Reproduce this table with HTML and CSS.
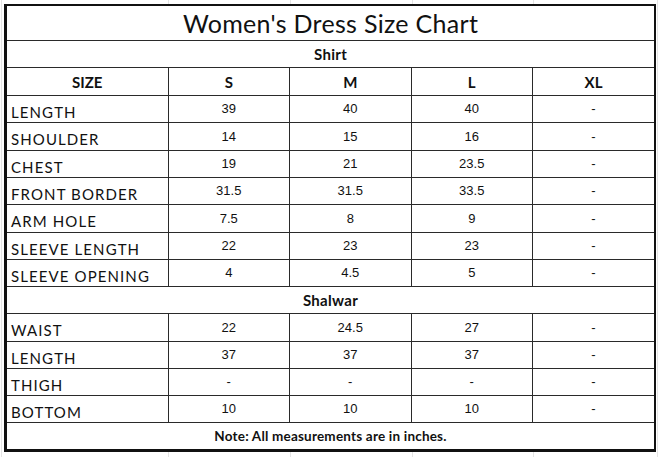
FILE: index.html
```html
<!DOCTYPE html>
<html>
<head>
<meta charset="utf-8">
<link rel="stylesheet" href="styles.css">
</head>
<body>
<div class="sheet">
  <div class="frame">
    <table class="chart">
      <colgroup>
        <col class="c-label"><col class="c-size"><col class="c-size"><col class="c-size"><col class="c-size">
      </colgroup>
      <tr class="r-title"><td colspan="5" class="title">Women's Dress Size Chart</td></tr>
      <tr class="r27"><td colspan="5" class="section">Shirt</td></tr>
      <tr class="r28 head"><td>SIZE</td><td>S</td><td>M</td><td>L</td><td>XL</td></tr>
      <tr class="r27"><td class="label">LENGTH</td><td class="val">39</td><td class="val">40</td><td class="val">40</td><td class="val">-</td></tr>
      <tr class="r28"><td class="label">SHOULDER</td><td class="val">14</td><td class="val">15</td><td class="val">16</td><td class="val">-</td></tr>
      <tr class="r27"><td class="label">CHEST</td><td class="val">19</td><td class="val">21</td><td class="val">23.5</td><td class="val">-</td></tr>
      <tr class="r27"><td class="label">FRONT BORDER</td><td class="val">31.5</td><td class="val">31.5</td><td class="val">33.5</td><td class="val">-</td></tr>
      <tr class="r28"><td class="label">ARM HOLE</td><td class="val">7.5</td><td class="val">8</td><td class="val">9</td><td class="val">-</td></tr>
      <tr class="r27"><td class="label">SLEEVE LENGTH</td><td class="val">22</td><td class="val">23</td><td class="val">23</td><td class="val">-</td></tr>
      <tr class="r27"><td class="label">SLEEVE OPENING</td><td class="val">4</td><td class="val">4.5</td><td class="val">5</td><td class="val">-</td></tr>
      <tr class="r27"><td colspan="5" class="section">Shalwar</td></tr>
      <tr class="r28"><td class="label">WAIST</td><td class="val">22</td><td class="val">24.5</td><td class="val">27</td><td class="val">-</td></tr>
      <tr class="r27"><td class="label">LENGTH</td><td class="val">37</td><td class="val">37</td><td class="val">37</td><td class="val">-</td></tr>
      <tr class="r27"><td class="label">THIGH</td><td class="val">-</td><td class="val">-</td><td class="val">-</td><td class="val">-</td></tr>
      <tr class="r27"><td class="label">BOTTOM</td><td class="val">10</td><td class="val">10</td><td class="val">10</td><td class="val">-</td></tr>
      <tr class="r27"><td colspan="5" class="note">Note: All measurements are in inches.</td></tr>
    </table>
  </div>
</div>
</body>
</html>
```
FILE: styles.css
```css
html, body {
  margin: 0;
  padding: 0;
  background: #fff;
}

.sheet {
  width: 660px;
  height: 457px;
  padding: 4px 0 0 4px;
  box-sizing: border-box;
  background-color: #fff;
  background-image:
    linear-gradient(#e4e4e4, #e4e4e4),
    linear-gradient(#e4e4e4, #e4e4e4),
    linear-gradient(#e4e4e4, #e4e4e4),
    linear-gradient(#e4e4e4, #e4e4e4),
    linear-gradient(#e4e4e4, #e4e4e4),
    linear-gradient(#e4e4e4, #e4e4e4);
  background-size: 1px 100%;
  background-repeat: no-repeat;
  background-position: 1px 0, 168px 0, 290px 0, 412px 0, 533px 0, 657px 0;
}

.frame {
  width: 652px;
  border: 2px solid #111;
  border-left-width: 3px;
  border-bottom-width: 3px;
  box-sizing: border-box;
  background: #fff;
}

.chart {
  width: 100%;
  border-collapse: collapse;
  border-style: hidden;
  table-layout: fixed;
}

.c-label { width: 161px; }
.c-size { width: 121.5px; }

.chart td {
  border: 1px solid #2a2a2a;
  padding: 0;
  text-align: center;
  vertical-align: middle;
  color: #111;
  white-space: nowrap;
  overflow: hidden;
}

.r-title { height: 34px; }
.r27 { height: 27px; }
.r28 { height: 28px; }

.title {
  font-family: Lato, "Noto Sans", sans-serif;
  font-size: 25px;
  font-weight: 400;
  letter-spacing: 0.3px;
  color: #0d0d0d;
  padding-top: 2px;
}

.section {
  font-family: Lato, "Noto Sans", sans-serif;
  font-weight: 700;
  font-size: 15px;
  letter-spacing: 0.3px;
  padding-top: 1px;
}

.head td {
  font-family: Lato, "Noto Sans", sans-serif;
  font-weight: 700;
  font-size: 15px;
  padding-top: 1px;
}

.chart td.label {
  text-align: left;
  padding: 6px 0 0 4px;
  font-family: Lato, "Noto Sans", sans-serif;
  font-size: 15px;
  letter-spacing: 1.1px;
  color: #111;
}

.val {
  font-family: "Liberation Sans", Arial, sans-serif;
  font-size: 13px;
  color: #222;
  padding-bottom: 2px;
}

.note {
  font-family: Lato, "Noto Sans", sans-serif;
  font-weight: 700;
  font-size: 13.5px;
  letter-spacing: 0.2px;
  padding-top: 1px;
}
```
